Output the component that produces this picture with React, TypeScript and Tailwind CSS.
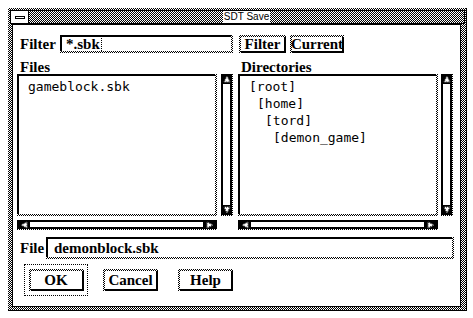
const D = "bg-[image:repeating-conic-gradient(#000_0%_25%,#fff_0%_50%)] bg-[length:2px_2px]";
const serif = "font-['Liberation_Serif',serif] font-bold";
const mono = "font-['DejaVu_Sans_Mono',monospace] text-[13px] leading-[17px] text-black";

function Sunken({ className, children }: { className?: string; children?: React.ReactNode }) {
  return (
    <div className={`${D} pr-[2px] pb-[2px] ${className ?? ""}`}>
      <div className="h-full bg-white border-t-2 border-l-2 border-black">{children}</div>
    </div>
  );
}

function Button({ label, className }: { label: string; className?: string }) {
  return (
    <div className={`${D} pl-[2px] pt-[2px] ${className ?? ""}`}>
      <div className={`h-full bg-white border-r-2 border-b-2 border-black flex items-center justify-center ${serif} text-[15px] leading-none text-black`}>
        {label}
      </div>
    </div>
  );
}

function Arrow({ dir }: { dir: "up" | "down" | "left" | "right" }) {
  const d = {
    up: "M4 1 L7 7 L1 7 Z",
    down: "M1 1 L7 1 L4 7 Z",
    left: "M1 4 L7 1 L7 7 Z",
    right: "M1 1 L7 4 L1 7 Z",
  }[dir];
  return (
    <svg width="8" height="8" viewBox="0 0 8 8">
      <path d={d} fill="white" stroke="white" strokeWidth="0.5" />
      <path d={d} fill="none" stroke="#000" strokeWidth="1" strokeDasharray="1 1" />
    </svg>
  );
}

function VScroll() {
  return (
    <div className={`w-[12px] h-full flex flex-col ${D} pr-[1px] pb-[1px]`}>
      <div className="h-[10px] bg-black flex items-center justify-center">
        <Arrow dir="up" />
      </div>
      <div className="flex-1 bg-white border-x-2 border-black" />
      <div className="h-[10px] bg-black flex items-center justify-center">
        <Arrow dir="down" />
      </div>
    </div>
  );
}

function HScroll({ className }: { className?: string }) {
  return (
    <div className={`h-[10px] flex ${D} pb-[1px] ${className ?? ""}`}>
      <div className="w-[13px] bg-black flex items-center justify-center">
        <Arrow dir="left" />
      </div>
      <div className="flex-1 bg-white border-y-2 border-black" />
      <div className="w-[14px] bg-black flex items-center justify-center">
        <Arrow dir="right" />
      </div>
    </div>
  );
}

const dirs = [
  { name: "[root]", indent: "pl-[9px]" },
  { name: "[home]", indent: "pl-[17px]" },
  { name: "[tord]", indent: "pl-[25px]" },
  { name: "[demon_game]", indent: "pl-[33px]" },
];

export default function App() {
  return (
    <div className="w-[473px] h-[318px] bg-white pt-[8px] pl-[8px]">
      <div className={`w-[459px] h-[303px] ${D} pt-[2px] pl-[2px] flex flex-col border-r border-b border-black`}>
        {/* title bar */}
        <div className="h-[14px] mr-[1px] flex border border-black">
          <div className="w-[18px] h-full bg-white border-r border-black flex items-center justify-center">
            <div className="w-[10px] h-[3px] border border-black bg-white" />
          </div>
          <div className={`flex-1 ${D} flex items-center justify-center`}>
            <span className="bg-white px-[1px] h-full flex items-center font-['Liberation_Sans',sans-serif] text-[10px] leading-none text-black">
              SDT Save
            </span>
          </div>
        </div>

        {/* body */}
        <div className="flex-1 ml-[2px] mr-[5px] mb-[3px] bg-white border border-black flex flex-col">
          <div className="mt-[10px] h-[18px] flex items-center">
            <span className={`ml-[7px] w-[40px] ${serif} text-[15px] leading-none text-black`}>Filter</span>
            <Sunken className="w-[173px] h-[18px]">
              <div className="h-full flex items-center pl-[4px]">
                <span className={`${serif} text-[15px] leading-none text-black`}>*.sbk</span>
                <span className="ml-[1px] h-[13px] border-l border-dotted border-black" />
              </div>
            </Sunken>
            <Button label="Filter" className="ml-[6px] w-[47px] h-[18px]" />
            <Button label="Current" className="ml-[4px] w-[54px] h-[18px]" />
          </div>

          <div className="mt-[7px] h-[14px] flex items-center">
            <span className={`ml-[7px] w-[221px] ${serif} text-[15px] leading-none text-black`}>Files</span>
            <span className={`${serif} text-[15px] leading-none text-black`}>Directories</span>
          </div>

          <div className="h-[142px] flex pl-[4px]">
            <Sunken className="w-[200px] h-full">
              <div className={`${mono} pl-[9px] pt-[2px]`}>gameblock.sbk</div>
            </Sunken>
            <div className="ml-[4px] h-full">
              <VScroll />
            </div>
            <Sunken className="ml-[5px] w-[200px] h-full">
              <div className={`${mono} pt-[2px]`}>
                {dirs.map((d) => (
                  <div key={d.name} className={d.indent}>
                    {d.name}
                  </div>
                ))}
              </div>
            </Sunken>
            <div className="ml-[3px] h-full">
              <VScroll />
            </div>
          </div>

          <div className="mt-[4px] flex pl-[4px]">
            <HScroll className="w-[200px]" />
            <HScroll className="ml-[21px] w-[200px]" />
          </div>

          <div className="mt-[7px] h-[22px] flex items-center">
            <span className={`ml-[7px] w-[26px] ${serif} text-[15px] leading-none text-black`}>File</span>
            <Sunken className="w-[408px] h-[22px]">
              <div className="h-full flex items-center pl-[6px]">
                <span className={`${serif} text-[15px] leading-none text-black`}>demonblock.sbk</span>
              </div>
            </Sunken>
          </div>

          <div className="mt-[5px] flex items-center">
            <div className="ml-[11px] w-[64px] h-[32px] border border-dotted border-black flex items-center justify-center">
              <Button label="OK" className="w-[55px] h-[22px]" />
            </div>
            <Button label="Cancel" className="ml-[15px] w-[55px] h-[22px]" />
            <Button label="Help" className="ml-[20px] w-[55px] h-[22px]" />
          </div>
        </div>
      </div>
    </div>
  );
}
